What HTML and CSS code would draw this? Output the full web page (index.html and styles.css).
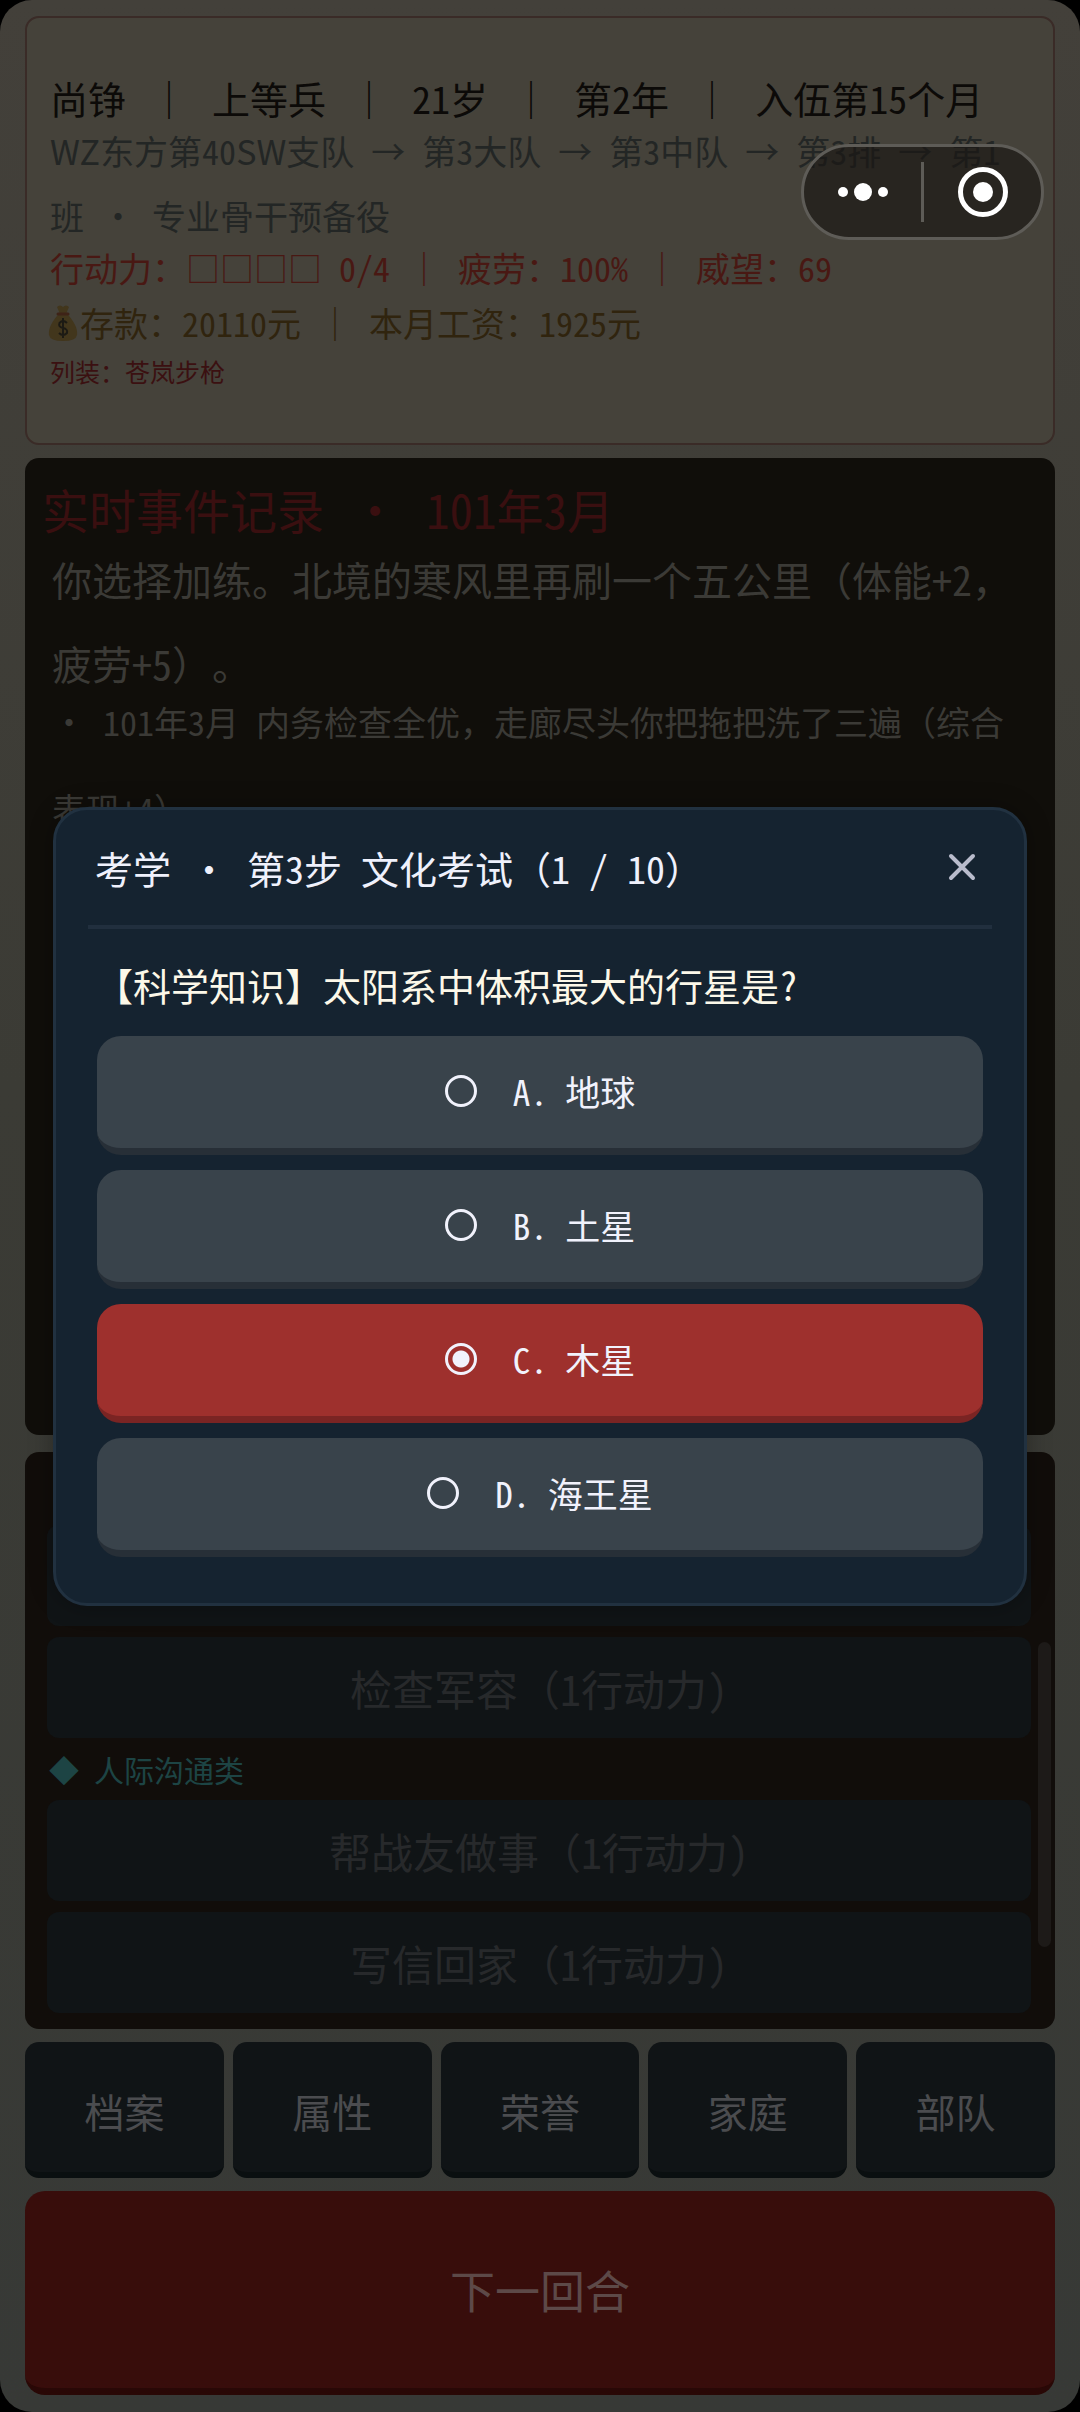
FILE: index.html
```html
<!DOCTYPE html>
<html lang="zh-CN">
<head>
<meta charset="utf-8">
<meta name="viewport" content="width=device-width, initial-scale=1">
<title>考学</title>
<link rel="stylesheet" href="styles.css">
</head>
<body>
<div class="screen">
  <header class="status">
    <div class="status-name"><span>尚铮</span><span class="wide">｜</span><span>上等兵</span><span class="wide">｜</span><span>21岁</span><span class="wide">｜</span><span>第2年</span><span class="wide">｜</span><span>入伍第15个月</span></div>
    <div class="status-unit"><span class="wide">WZ</span>东方第40<span class="wide">SW</span>支队 → 第3大队 → 第3中队 → 第3排 → 第1班 <span class="dot">·</span> 专业骨干预备役</div>
    <div class="status-power">行动力：□□□□ 0/4 <span class="wide">｜</span> 疲劳：100% <span class="wide">｜</span> 威望：69</div>
    <div class="status-money">
      <svg class="bag" viewBox="0 0 34 40" aria-hidden="true">
        <path d="M11 4 Q14 1 17 4 Q20 1 23 4 L20 11 H14 Z" fill="#42361c"/>
        <path d="M13 11 H21 C27 17 32 25 31 32 Q30 38 17 38 Q4 38 3 32 C2 25 7 17 13 11 Z" fill="#42361c"/>
        <path d="M12 11 H22" stroke="#3e2317" stroke-width="3" stroke-linecap="round"/>
        <path d="M21 20 Q17 16 13.500 20 Q12 24 17 25 Q22 26 21 30 Q17 34 13 30 M17 15 V35" fill="none" stroke="#1c1a14" stroke-width="2"/>
      </svg>
      <span>存款：20110元 <span class="wide">｜</span> 本月工资：1925元</span>
    </div>
    <div class="status-gear">列装：苍岚步枪</div>
  </header>

  <main class="log">
    <h1 class="log-title">实时事件记录 <span class="dot">·</span> 101年3月</h1>
    <p class="log-lead">你选择加练。北境的寒风里再刷一个五公里<span class="wide">（</span>体能+2<span class="wide">，</span>疲劳+5<span class="wide">）</span>。</p>
    <p class="log-entry log-first"><span class="dot">·</span> 101年3月 内务检查全优<span class="wide">，</span>走廊尽头你把拖把洗了三遍<span class="wide">（</span>综合表现+4<span class="wide">）</span></p>
    <p class="log-entry log-tail">练</p>
    <p class="log-entry log-tail">练</p>
  </main>

  <section class="actions">
    <button class="action" type="button" aria-label="行动"></button>
    <button class="action" type="button">检查军容<span class="wide">（</span>1行动力）</button>
    <h2 class="group"><span>◆</span> 人际沟通类</h2>
    <button class="action" type="button">帮战友做事<span class="wide">（</span>1行动力）</button>
    <button class="action" type="button">写信回家<span class="wide">（</span>1行动力）</button>
    <div class="thumb"></div>
  </section>

  <nav class="tabs">
    <button class="tab" type="button">档案</button>
    <button class="tab" type="button">属性</button>
    <button class="tab" type="button">荣誉</button>
    <button class="tab" type="button">家庭</button>
    <button class="tab" type="button">部队</button>
  </nav>
  <button class="next" type="button">下一回合</button>

  <div class="overlay">
    <div class="modal" role="dialog" aria-labelledby="exam-title">
      <div class="modal-head">
        <h2 class="modal-title" id="exam-title">考学 <span class="dot">·</span> 第3步 文化考试<span class="wide">（</span>1 / 10<span class="wide">）</span></h2>
        <button class="close" type="button" aria-label="关闭">
          <svg viewBox="0 0 28 28"><path d="M3 3 L25 25 M25 3 L3 25" fill="none" stroke="#b9bccc" stroke-width="4" stroke-linecap="round"/></svg>
        </button>
      </div>
      <fieldset class="quiz">
        <legend class="question">【科学知识】太阳系中体积最大的行星是?</legend>
        <label class="option"><input type="radio" name="answer" value="a"><span>A. 地球</span></label>
        <label class="option"><input type="radio" name="answer" value="b"><span>B. 土星</span></label>
        <label class="option"><input type="radio" name="answer" value="c" checked><span>C. 木星</span></label>
        <label class="option"><input type="radio" name="answer" value="d"><span>D. 海王星</span></label>
      </fieldset>
    </div>
  </div>

  <div class="capsule">
    <button class="cap-btn" type="button" aria-label="更多">
      <svg width="60" height="60" viewBox="0 0 60 60"><g fill="#fff"><circle cx="10" cy="30" r="5"/><circle cx="30" cy="30" r="9"/><circle cx="50" cy="30" r="5"/></g></svg>
    </button>
    <button class="cap-btn" type="button" aria-label="退出">
      <svg width="60" height="60" viewBox="0 0 60 60"><circle cx="30" cy="30" r="22.500" fill="none" stroke="#fff" stroke-width="5"/><circle cx="30" cy="30" r="10" fill="#fff"/></svg>
    </button>
  </div>
</div>
</body>
</html>
```
FILE: styles.css
```css
* { box-sizing: border-box; }

body {
  margin: 0;
  background: #000;
  font-family: "Noto Sans CJK SC", sans-serif;
  font-feature-settings: "hwid";
  text-spacing-trim: space-all;
}

h1, h2, p { margin: 0; font-weight: 400; }

button {
  margin: 0;
  padding: 0;
  border: 0;
  background: none;
  font: inherit;
  font-feature-settings: inherit;
}

.screen {
  position: relative;
  display: flex;
  flex-direction: column;
  gap: 13px;
  height: 100vh;
  min-height: 1800px;
  padding: 16px 25px 17px;
  border-radius: 32px;
  background: linear-gradient(#43403a, #3b3b35 45%, #373936);
}

.dot { display: inline-block; width: 1em; text-align: center; }
.wide { font-feature-settings: normal; }

/* Soldier status card */
.status {
  padding: 60px 25px 56px 23px;
  border: 2px solid #3a2b27;
  border-radius: 14px;
  background: #45423a;
  font-size: 34px;
  line-height: 40px;
}
.status-name { display: flex; gap: 24px; font-size: 38px; color: #0c0a08; white-space: nowrap; }
.status-unit { line-height: 65px; color: #232625; }
.status-power { color: #491813; }
.status-money { display: flex; margin-top: 15px; color: #30240e; }
.bag { width: 34px; height: 40px; margin-left: -4px; }
.status-gear { margin-top: 12px; font-size: 25px; line-height: 32px; color: #3b1011; }

/* Event log */
.log {
  flex: 17 17 0;
  min-height: 0;
  overflow: hidden;
  padding: 23px 27px 0 17px;
  border-radius: 14px;
  background: #100e0a;
  color: #3b3a36;
}
.log-title { font-size: 47px; line-height: 56px; color: #3a0f10; }
.log-title .dot { margin: 0 4px; }
.log-lead { padding-left: 10px; font-size: 40px; line-height: 84px; }
.log-entry { padding-left: 10px; font-size: 34px; line-height: 87px; }
.log-first { margin-top: -27px; }
.log-tail { margin-top: 87px; }

/* Action list */
.actions {
  position: relative;
  flex: 10 10 0;
  min-height: 0;
  display: flex;
  flex-direction: column;
  justify-content: flex-end;
  gap: 11px;
  margin-top: 4px;
  padding: 0 24px 16px 22px;
  overflow: hidden;
  border-radius: 14px;
  background: #110d0a;
}
.action {
  flex: none;
  height: 101px;
  border-radius: 12px;
  background: #101416;
  font-size: 42px;
  color: #27292b;
}
.group { padding-left: 2px; font-size: 30px; line-height: 40px; color: #1d4444; }
.thumb {
  position: absolute;
  right: 4px;
  top: 190px;
  width: 13px;
  height: 305px;
  border-radius: 7px;
  background: #1d1a18;
}

/* Bottom navigation */
.tabs { display: grid; grid-template-columns: repeat(5, 1fr); gap: 9px; }
.tab {
  height: 136px;
  padding-top: 8px;
  border-bottom: 6px solid #0a0f10;
  border-radius: 14px;
  background: #101416;
  font-size: 40px;
  color: #4b4c4f;
}
.next {
  height: 204px;
  border-bottom: 7px solid #290806;
  border-radius: 20px;
  background: #380d0b;
  font-size: 45px;
  color: #5d4948;
}

/* Exam dialog */
.overlay {
  position: absolute;
  inset: 0;
  display: flex;
  align-items: center;
  padding: 0 53px;
}
.modal {
  flex: 1;
  padding: 30px 32px;
  border: 3px solid #213140;
  border-radius: 34px;
  background: #152330;
  box-shadow: 0 0 24px rgba(0, 0, 0, .3);
}
.modal-head {
  display: flex;
  justify-content: space-between;
  align-items: center;
  height: 89px;
  padding: 0 16px 30px 7px;
  border-bottom: 4px solid #212f3e;
}
.modal-title { font-size: 38px; line-height: 55px; color: #eff1fc; }
.close { width: 28px; height: 28px; }
.close svg { display: block; }

.quiz {
  display: flex;
  flex-direction: column;
  gap: 15px;
  margin: 0;
  padding: 0 9px 16px;
  border: 0;
}
.question {
  padding: 29px 0 24px;
  margin-left: -2px;
  font-size: 38px;
  line-height: 54px;
  color: #fcf8e9;
}
.option {
  display: flex;
  align-items: center;
  justify-content: center;
  gap: 36px;
  height: 119px;
  padding-bottom: 2px;
  border-bottom: 7px solid #272f37;
  border-radius: 24px;
  background: #39434b;
  font-size: 35px;
  color: #f1f2fc;
}
.option:has(input:checked) { border-color: #7a2423; background: #9e302d; }
.option input {
  appearance: none;
  width: 32px;
  height: 32px;
  margin: 0;
  border: 3px solid #f1f2fc;
  border-radius: 50%;
}
.option input:checked {
  background: radial-gradient(circle, #f1f2fc 8px, transparent 9px);
}

/* Mini-program capsule */
.capsule {
  position: absolute;
  top: 144px;
  right: 36px;
  display: flex;
  width: 243px;
  height: 96px;
  padding: 15px 0;
  border: 3px solid #5e5c57;
  border-radius: 48px;
  background: rgba(24, 22, 18, .65);
}
.cap-btn { flex: 1; display: flex; align-items: center; justify-content: center; }
.cap-btn + .cap-btn { border-left: 3px solid #5e5c57; }
```
